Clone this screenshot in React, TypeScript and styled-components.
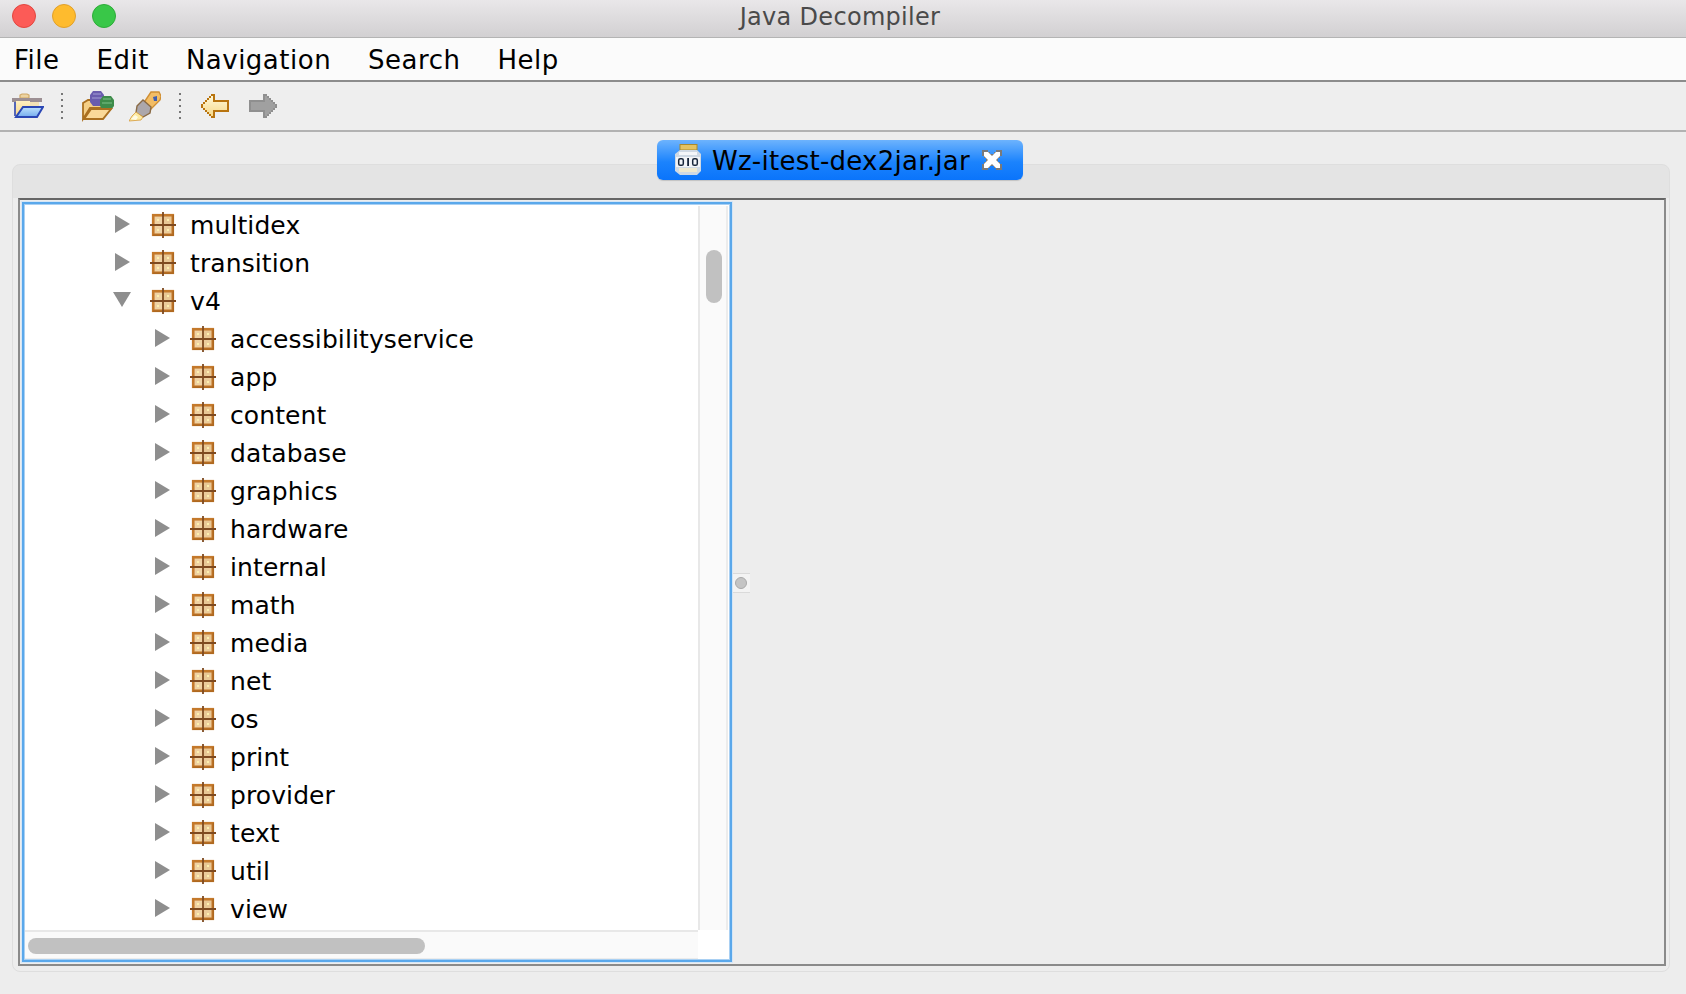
import React from "react";
import styled, { createGlobalStyle } from "styled-components";

const Global = createGlobalStyle`
  html, body { margin: 0; padding: 0; background: #ededed; }
  * { box-sizing: border-box; }
`;

const FONT = `"DejaVu Sans", "Liberation Sans", sans-serif`;

const Window = styled.div`
  width: 1686px;
  height: 994px;
  display: flex;
  flex-direction: column;
  overflow: hidden;
  background: #ededed;
  font-family: ${FONT};
  color: #000;
`;

const TitleBar = styled.header`
  height: 38px;
  flex: none;
  position: relative;
  display: flex;
  align-items: center;
  justify-content: center;
  background: linear-gradient(#e9e7e9, #d2d0d2);
  border-bottom: 1px solid #b4b4b4;
  padding: 0 6px 3px 0;
`;

const Lights = styled.div`
  position: absolute;
  left: 12px;
  top: 4px;
  display: flex;
  gap: 16px;
`;

const Light = styled.span<{ $fill: string; $edge: string }>`
  width: 24px;
  height: 24px;
  border-radius: 50%;
  background: ${(p) => p.$fill};
  border: 1px solid ${(p) => p.$edge};
`;

const Title = styled.h1`
  margin: 0;
  font: 400 24px ${FONT};
  letter-spacing: 0.3px;
  color: #4a4a4a;
`;

const MenuBar = styled.nav`
  height: 44px;
  flex: none;
  display: flex;
  align-items: center;
  padding: 2px 0 0 14px;
  gap: 37px;
  background: #fbfbfb;
  border-bottom: 2px solid #8c8c8c;
`;

const MenuItem = styled.span`
  font-size: 26px;
  letter-spacing: 0.5px;
  line-height: 1;
`;

const Toolbar = styled.div`
  height: 50px;
  flex: none;
  display: flex;
  align-items: center;
  padding-left: 12px;
  background: #eeeeee;
  border-bottom: 2px solid #b2b2b2;
`;

const ToolIcon = styled.svg<{ $w?: number; $ml?: number }>`
  width: ${(p) => p.$w ?? 32}px;
  height: 32px;
  margin-left: ${(p) => p.$ml ?? 0}px;
  flex: none;
`;

const ToolSep = styled.span<{ $ml: number }>`
  width: 2px;
  height: 26px;
  margin-left: ${(p) => p.$ml}px;
  flex: none;
  background: repeating-linear-gradient(#777 0 2px, transparent 2px 6px);
`;

const Body = styled.main`
  flex: 1;
  min-height: 0;
  display: flex;
  flex-direction: column;
  padding: 8px 16px 22px 12px;
`;

const TabStrip = styled.div`
  height: 40px;
  flex: none;
  margin-bottom: -16px;
  display: flex;
  justify-content: center;
  position: relative;
  z-index: 1;
  padding-right: 2px;
`;

const Tab = styled.div`
  width: 366px;
  height: 40px;
  display: flex;
  align-items: center;
  padding-left: 18px;
  gap: 11px;
  border-radius: 6px;
  background: linear-gradient(#6db3fd, #1b83fd 55%, #0a74fb);
  box-shadow: 0 1px 1px rgba(0, 0, 0, 0.15);
`;

const TabLabel = styled.span`
  font-size: 26px;
  line-height: 1;
  letter-spacing: 0.25px;
  margin-top: 2px;
  white-space: nowrap;
`;

const TabPane = styled.section`
  flex: 1;
  min-height: 0;
  display: flex;
  flex-direction: column;
  padding: 33px 3px 5px 5px;
  border: 1px solid #dedede;
  border-radius: 8px;
  background: linear-gradient(#e4e4e4 0 33px, #ededed 33px);
`;

const Frame = styled.div`
  flex: 1;
  min-height: 0;
  display: flex;
  padding: 2px;
  border: 2px solid #8a8a8a;
  border-top-color: #666;
  background: #ededed;
`;

const TreePanel = styled.div`
  width: 710px;
  flex: none;
  position: relative;
  display: grid;
  grid-template-columns: 1fr 32px;
  grid-template-rows: 1fr 30px;
  border: 2px solid #5aa8eb;
  box-shadow: 0 0 0 1px #d5e6f6;
  background: #fff;
  padding-top: 2px;

  &::after {
    content: "";
    position: absolute;
    inset: 0;
    border: 1px solid #a9d0f3;
    pointer-events: none;
  }
`;

const TreeList = styled.ul`
  margin: 0;
  padding: 0;
  list-style: none;
  overflow: hidden;
  background: #fff;
`;

const Row = styled.li<{ $level: number }>`
  height: 38px;
  display: flex;
  align-items: center;
  padding-left: ${(p) => 91 + p.$level * 40}px;
`;

const Arrow = styled.svg`
  width: 16px;
  height: 18px;
  flex: none;
  margin-top: -2px;
  overflow: visible;
`;

const PackageIcon = styled.svg`
  width: 26px;
  height: 26px;
  margin-left: 19px;
  flex: none;
`;

const RowLabel = styled.span`
  margin-left: 14px;
  font-size: 25px;
  letter-spacing: 0.1px;
  line-height: 1;
  white-space: nowrap;
`;

const VTrack = styled.div`
  background: #fafafa;
  border-left: 2px solid #e8e8e8;
  border-right: 2px solid #ececec;
  padding: 44px 6px 0 6px;
  margin-right: 2px;
`;

const VThumb = styled.div`
  width: 16px;
  height: 53px;
  border-radius: 8px;
  background: #c1c1c1;
`;

const HTrack = styled.div`
  background: #fafafa;
  border-top: 2px solid #e8e8e8;
  border-bottom: 2px solid #ececec;
  padding: 6px 0 0 4px;
`;

const HThumb = styled.div`
  width: 397px;
  height: 16px;
  border-radius: 8px;
  background: #c1c1c1;
`;

const Corner = styled.div`
  background: #fff;
`;

const Splitter = styled.div`
  width: 18px;
  flex: none;
  display: flex;
  align-items: center;
  justify-content: center;
  padding-top: 2px;
`;

const Knob = styled.div`
  width: 18px;
  height: 20px;
  display: flex;
  align-items: center;
  justify-content: center;
  background: #f3f3f3;
  border-top: 1px solid #dadada;
  border-bottom: 1px solid #dadada;
`;

const KnobDot = styled.span`
  width: 12px;
  height: 12px;
  border-radius: 50%;
  background: #c4c4c4;
  border: 1px solid #a9a9a9;
`;

const EmptyPane = styled.div`
  flex: 1;
  background: #ededed;
`;

const RightArrow = () => (
  <Arrow viewBox="0 0 16 18">
    <path d="M0 0 L15 9 L0 18 Z" fill="#8e8e8e" />
  </Arrow>
);

const DownArrow = () => (
  <Arrow viewBox="0 0 16 18">
    <path d="M-2 1 L16 1 L7 16 Z" fill="#8e8e8e" />
  </Arrow>
);

const Package = () => (
  <PackageIcon viewBox="0 0 26 26">
    <rect x="3.2" y="3.2" width="19.6" height="19.6" fill="#e9c798" stroke="#c4792b" strokeWidth="2.6" />
    <path d="M3 23.2 H23.2 V3" fill="none" stroke="#a8641e" strokeWidth="1.2" />
    <rect x="5" y="5" width="7" height="7" fill="#efd2a4" />
    <rect x="14" y="5" width="7" height="7" fill="#e8c795" />
    <rect x="5" y="14" width="7" height="7" fill="#efd2a4" />
    <rect x="14" y="14" width="7" height="7" fill="#ebcc9b" />
    <rect x="7" y="7" width="2" height="2" fill="#fdf0ae" />
    <rect x="17" y="7" width="2" height="2" fill="#fdf0ae" />
    <rect x="7" y="17" width="2" height="2" fill="#fdf0ae" />
    <rect x="17" y="17" width="2" height="2" fill="#fdf0ae" />
    <path d="M13 0 V26 M0 13 H26" stroke="#7e4a20" strokeWidth="1.8" />
  </PackageIcon>
);

const OpenFile = () => (
  <ToolIcon viewBox="0 0 32 32" $w={32}>
    <defs>
      <linearGradient id="folderBlue" x1="0" y1="0" x2="0" y2="1">
        <stop offset="0" stopColor="#bfe2fc" />
        <stop offset="1" stopColor="#74acee" />
      </linearGradient>
      <linearGradient id="folderCream" x1="0" y1="0" x2="0" y2="1">
        <stop offset="0" stopColor="#fff0c0" />
        <stop offset="1" stopColor="#f6d68e" />
      </linearGradient>
    </defs>
    <path d="M8 8 V5 L10 4 H15 L17 5 V8 Z" fill="#ecd3a0" stroke="#cfa867" strokeWidth="1.2" />
    <rect x="0" y="8" width="30" height="4" fill="#9c8f93" />
    <rect x="2" y="12" width="2" height="14" fill="#5566b8" />
    <rect x="4" y="11" width="14" height="15" fill="url(#folderCream)" />
    <rect x="18" y="12" width="9" height="4" fill="#f3e2b6" />
    <path d="M11 17 H31 L25 27 H4 Z" fill="url(#folderBlue)" stroke="#2a47b5" strokeWidth="2" />
  </ToolIcon>
);

const OpenPackage = () => (
  <ToolIcon viewBox="0 0 32 32" $ml={19} $w={32}>
    <path d="M1 29 V13 L6 10 H26 V18 H8 Z" fill="#f5cf86" stroke="#ab7020" strokeWidth="1.8" />
    <path d="M11 1 H19 L22 5 V12 L19 16 H11 L8 12 V5 Z" fill="#6a5cae" />
    <path d="M11 4 H19 M10 8 H20" stroke="#9088c8" strokeWidth="1.6" />
    <path d="M21 6 H29 L32 10 V16 L29 20 H21 L18 16 V10 Z" fill="#3e8c4a" />
    <path d="M21 9 H29 M20 13 H30" stroke="#68b074" strokeWidth="1.4" />
    <path d="M9 19 H29 L21 29 H2 Z" fill="#fbd998" stroke="#ab7020" strokeWidth="2" />
  </ToolIcon>
);

const Pencil = () => (
  <ToolIcon viewBox="0 0 32 32" $ml={15}>
    <path d="M22 2 H30 L32 6 L31 10 L20 21 L14 14 Z" fill="#f2bd66" stroke="#d08f33" strokeWidth="1.4" />
    <path d="M24 7 L28 6 L28 11 L25 11 Z" fill="#3f5faf" />
    <path d="M8 16 L14 10 L22 17 L21 23 L14 27 L7 23 Z" fill="#aca7ab" stroke="#8a6a44" strokeWidth="1.4" />
    <path d="M7 22 L14 27 L12 30 L0 31 L3 26 Z" fill="#fdeaa2" stroke="#d59a3a" strokeWidth="0.8" />
    <path d="M2 29 L6 25 L9 27 L7 30 Z" fill="#fffbe6" />
  </ToolIcon>
);

const ARROW_OUTER = "M0 7 H1 V6 H2 V5 H3 V4 H4 V3 H5 V2 H7 V5 H14 V11 H7 V14 H5 V13 H4 V12 H3 V11 H2 V10 H1 V9 H0 Z";
const ARROW_INNER = "M1 8 V7 H2 V6 H3 V5 H4 V4 H5 V3 H6 V6 H13 V10 H6 V13 H5 V12 H4 V11 H3 V10 H2 V9 H1 Z";

const Back = () => (
  <ToolIcon viewBox="0 0 14 16" $ml={20} $w={28}>
    <defs>
      <linearGradient id="backFill" x1="0" y1="0" x2="0" y2="1">
        <stop offset="0" stopColor="#fff8d8" />
        <stop offset="1" stopColor="#f7d98a" />
      </linearGradient>
    </defs>
    <path d={ARROW_OUTER} fill="#b8740f" shapeRendering="crispEdges" />
    <path d={ARROW_INNER} fill="url(#backFill)" shapeRendering="crispEdges" />
  </ToolIcon>
);

const Forward = () => (
  <ToolIcon viewBox="0 0 14 16" $ml={20} $w={28}>
    <g transform="translate(14,0) scale(-1,1)">
      <path d={ARROW_OUTER} fill="#8f8f8f" shapeRendering="crispEdges" />
      <path d={ARROW_INNER} fill="#a0a0a0" shapeRendering="crispEdges" />
    </g>
  </ToolIcon>
);

const JarIcon = styled.svg`
  width: 26px;
  height: 32px;
  flex: none;
`;

const CloseIcon = styled.svg`
  width: 20px;
  height: 20px;
  margin-left: 1px;
  flex: none;
`;

const Jar = () => (
  <JarIcon viewBox="0 0 26 32">
    <rect x="5" y="0.5" width="17" height="5.5" fill="#e3c262" stroke="#a98a2c" strokeWidth="1" />
    <path d="M5 6 H22 L26 10 V27 L22 31 H5 L0 27 V10 Z" fill="#cfd9e4" />
    <rect x="4" y="8" width="18" height="3" fill="#f4f6f9" />
    <rect x="1" y="13" width="24" height="10" fill="#f2f4f7" />
    <rect x="4" y="24" width="18" height="4" fill="#efe9cf" />
    <rect x="3.7" y="14.7" width="4.6" height="6.6" rx="1.6" fill="none" stroke="#18263a" strokeWidth="1.5" />
    <rect x="12.2" y="14" width="1.8" height="8" fill="#18263a" />
    <rect x="17.7" y="14.7" width="4.6" height="6.6" rx="1.6" fill="none" stroke="#18263a" strokeWidth="1.5" />
  </JarIcon>
);

const Close = () => (
  <CloseIcon viewBox="0 0 10 10">
    <path d="M0 0 H3 V1 H4 V2 H6 V1 H7 V0 H10 V3 H9 V4 H8 V6 H9 V7 H10 V10 H7 V9 H6 V8 H4 V9 H3 V10 H0 V7 H1 V6 H2 V4 H1 V3 H0 Z" fill="#7a7a7a" shapeRendering="crispEdges" />
    <path d="M1 1 H3 L5 3 L7 1 H9 V3 L7 5 L9 7 V9 H7 L5 7 L3 9 H1 V7 L3 5 L1 3 Z" fill="#fff" />
  </CloseIcon>
);

const rows: { label: string; level: number; open?: boolean }[] = [
  { label: "multidex", level: 0 },
  { label: "transition", level: 0 },
  { label: "v4", level: 0, open: true },
  ...[
    "accessibilityservice",
    "app",
    "content",
    "database",
    "graphics",
    "hardware",
    "internal",
    "math",
    "media",
    "net",
    "os",
    "print",
    "provider",
    "text",
    "util",
    "view",
  ].map((label) => ({ label, level: 1 })),
];

export default function App() {
  return (
    <Window>
      <Global />
      <TitleBar>
        <Lights>
          <Light $fill="#fc5b57" $edge="#e2463f" />
          <Light $fill="#febb2e" $edge="#e1a02a" />
          <Light $fill="#39c748" $edge="#2dac38" />
        </Lights>
        <Title>Java Decompiler</Title>
      </TitleBar>
      <MenuBar>
        {["File", "Edit", "Navigation", "Search", "Help"].map((m) => (
          <MenuItem key={m}>{m}</MenuItem>
        ))}
      </MenuBar>
      <Toolbar>
        <OpenFile />
        <ToolSep $ml={17} />
        <OpenPackage />
        <Pencil />
        <ToolSep $ml={18} />
        <Back />
        <Forward />
      </Toolbar>
      <Body>
        <TabStrip>
          <Tab>
            <Jar />
            <TabLabel>Wz-itest-dex2jar.jar</TabLabel>
            <Close />
          </Tab>
        </TabStrip>
        <TabPane>
          <Frame>
            <TreePanel>
              <TreeList>
                {rows.map((r) => (
                  <Row key={r.label} $level={r.level}>
                    {r.open ? <DownArrow /> : <RightArrow />}
                    <Package />
                    <RowLabel>{r.label}</RowLabel>
                  </Row>
                ))}
              </TreeList>
              <VTrack>
                <VThumb />
              </VTrack>
              <HTrack>
                <HThumb />
              </HTrack>
              <Corner />
            </TreePanel>
            <Splitter>
              <Knob>
                <KnobDot />
              </Knob>
            </Splitter>
            <EmptyPane />
          </Frame>
        </TabPane>
      </Body>
    </Window>
  );
}
